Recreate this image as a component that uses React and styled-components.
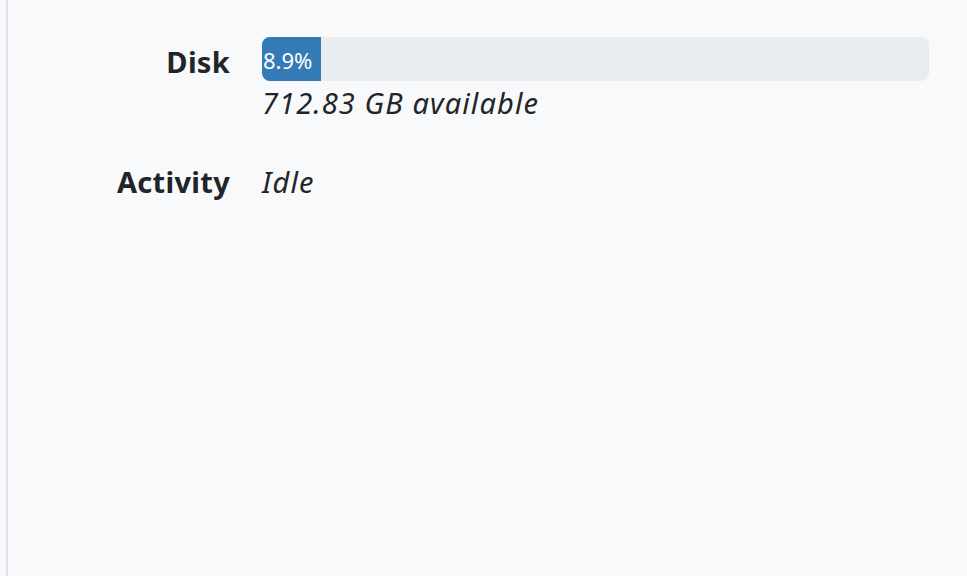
import React from "react";
import styled, { createGlobalStyle } from "styled-components";

const Global = createGlobalStyle`
  html, body { margin: 0; padding: 0; background: #f8f9fa; }
  body { font-family: "Noto Sans", "Open Sans", sans-serif; color: #212529; }
`;

const Page = styled.div`
  margin-left: 6px;
  border-left: 2px solid #dee2e6;
  min-height: 576px;
  box-sizing: border-box;
  padding: 37px 38px 0 0;
`;

const Grid = styled.dl`
  margin: 0;
  display: grid;
  grid-template-columns: 222px 1fr;
  column-gap: 32px;
  row-gap: 44px;
`;

const Label = styled.dt`
  font-weight: 700;
  font-size: 29px;
  letter-spacing: 0.3px;
  text-align: right;
  line-height: 35px;
  padding-top: ${(p) => p.$pt || 0}px;
`;

const Value = styled.dd`
  margin: 0;
  font-size: 29px;
  line-height: 35px;
`;

const Italic = styled.div`
  font-style: italic;
  letter-spacing: 1.1px;
  margin-top: ${(p) => p.$mt || 0}px;
`;

const Track = styled.div`
  height: 44px;
  background: #e9ecef;
  border-radius: 8px;
  overflow: hidden;
  display: flex;
`;

const Fill = styled.div`
  background: #337ab7;
  color: #fff;
  font-size: 22px;
  line-height: 44px;
  padding: 1px 0 0 1px;
  box-sizing: border-box;
  white-space: nowrap;
  overflow: hidden;
`;

export default function App() {
  const pct = 8.9;
  return (
    <>
      <Global />
      <Page>
        <Grid>
          <Label $pt={7}>Disk</Label>
          <Value>
            <Track>
              <Fill style={{ width: `${pct}%` }}>{pct}%&nbsp;&nbsp;used</Fill>
            </Track>
            <Italic $mt={4}>712.83 GB available</Italic>
          </Value>
          <Label>Activity</Label>
          <Value>
            <Italic>Idle</Italic>
          </Value>
        </Grid>
      </Page>
    </>
  );
}
